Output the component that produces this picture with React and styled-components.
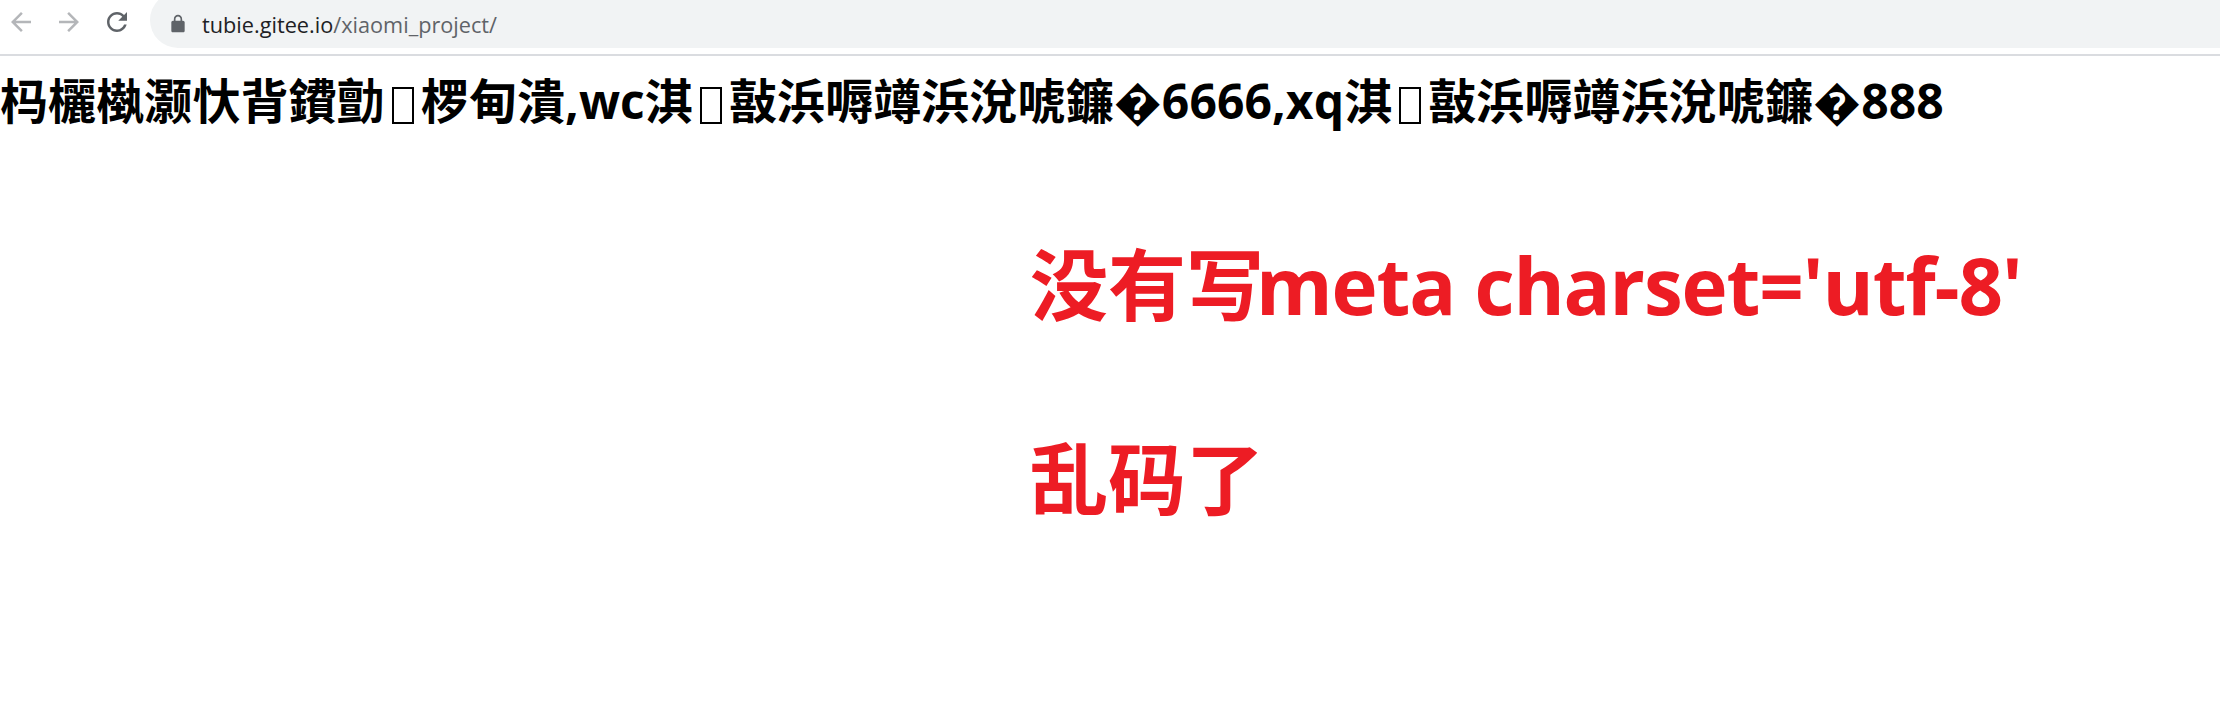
import React from "react";
import styled, { createGlobalStyle } from "styled-components";

const Global = createGlobalStyle`
  html, body {
    margin: 0;
    background: #fff;
  }
`;

const Toolbar = styled.div`
  display: flex;
  align-items: flex-start;
  height: 54px;
  border-bottom: 2px solid #dadce0;
  padding-left: 6px;
  overflow: hidden;
`;

const NavIcon = styled.svg`
  width: 30px;
  height: 30px;
  flex: none;
  margin: 7px 18px 0 0;
  fill: ${(p) => (p.$off ? "#b4b6b9" : "#5f6368")};
  transform: ${(p) => (p.$flip ? "scaleX(-1)" : "none")};
`;

const Omnibox = styled.div`
  display: flex;
  align-items: center;
  flex: 1;
  height: 48px;
  margin-top: -8px;
  padding: 8px 0 0 18px;
  background: #f1f3f4;
  border-radius: 28px 0 0 28px;
  font-family: "Open Sans", "Liberation Sans", sans-serif;
  font-size: 21.7px;
`;

const Lock = styled.svg`
  width: 20px;
  height: 20px;
  margin-right: 14px;
  fill: #5f6368;
`;

const Host = styled.span`
  color: #202124;
`;

const Path = styled.span`
  color: #5f6368;
`;

const Garbled = styled.h1`
  margin: 0;
  padding-top: 16px;
  font-family: "Open Sans", "Noto Sans CJK SC", sans-serif;
  font-size: 48px;
  line-height: 58px;
  font-weight: 700;
  letter-spacing: 0.1px;
  color: #000;
  white-space: nowrap;
`;

const Tofu = styled.span`
  display: inline-block;
  width: 22px;
  height: 37px;
  margin: 0 7px;
  box-sizing: border-box;
  border: 2px solid #000;
  vertical-align: -5px;
`;

const Note = styled.div`
  padding: 100px 0 0 1030px;
  font-family: "Open Sans", "Noto Sans CJK SC", sans-serif;
  font-size: 78px;
  font-weight: 700;
  color: #ed1c24;
  white-space: nowrap;
`;

const NoteLine = styled.div`
  line-height: 110px;
  margin-bottom: 84px;
`;

const Latin = styled.span`
  letter-spacing: -1.1px;
  margin-left: -8px;
`;

const ARROW = "M20 11H7.83l5.59-5.59L12 4l-8 8 8 8 1.41-1.41L7.83 13H20v-2z";
const RELOAD =
  "M17.65 6.35C16.2 4.9 14.21 4 12 4c-4.42 0-7.99 3.58-7.99 8s3.57 8 7.99 8c3.73 0 6.84-2.55 7.73-6h-2.08c-.82 2.33-3.04 4-5.65 4-3.31 0-6-2.69-6-6s2.69-6 6-6c1.66 0 3.14.69 4.22 1.78L13 11h7V4l-2.35 2.35z";
const LOCK =
  "M18 8h-1V6c0-2.76-2.24-5-5-5S7 3.24 7 6v2H6c-1.1 0-2 .9-2 2v10c0 1.1.9 2 2 2h12c1.1 0 2-.9 2-2V10c0-1.1-.9-2-2-2zM9 6c0-1.66 1.34-3 3-3s3 1.34 3 3v2H9V6z";

export default function App() {
  return (
    <>
      <Global />
      <Toolbar>
        <NavIcon $off viewBox="0 0 24 24">
          <path d={ARROW} />
        </NavIcon>
        <NavIcon $off $flip viewBox="0 0 24 24">
          <path d={ARROW} />
        </NavIcon>
        <NavIcon viewBox="0 0 24 24">
          <path d={RELOAD} />
        </NavIcon>
        <Omnibox>
          <Lock viewBox="0 0 24 24">
            <path d={LOCK} />
          </Lock>
          <Host>tubie.gitee.io</Host>
          <Path>/xiaomi_project/</Path>
        </Omnibox>
      </Toolbar>
      <Garbled>
        杩欐槸灏忕背鐨勯<Tofu />椤甸潰,wc淇<Tofu />敼浜嗕竴浜涗唬鐮�6666,xq淇<Tofu />敼浜嗕竴浜涗唬鐮�888
      </Garbled>
      <Note>
        <NoteLine>没有写<Latin>meta charset='utf-8'</Latin></NoteLine>
        <NoteLine>乱码了</NoteLine>
      </Note>
    </>
  );
}
